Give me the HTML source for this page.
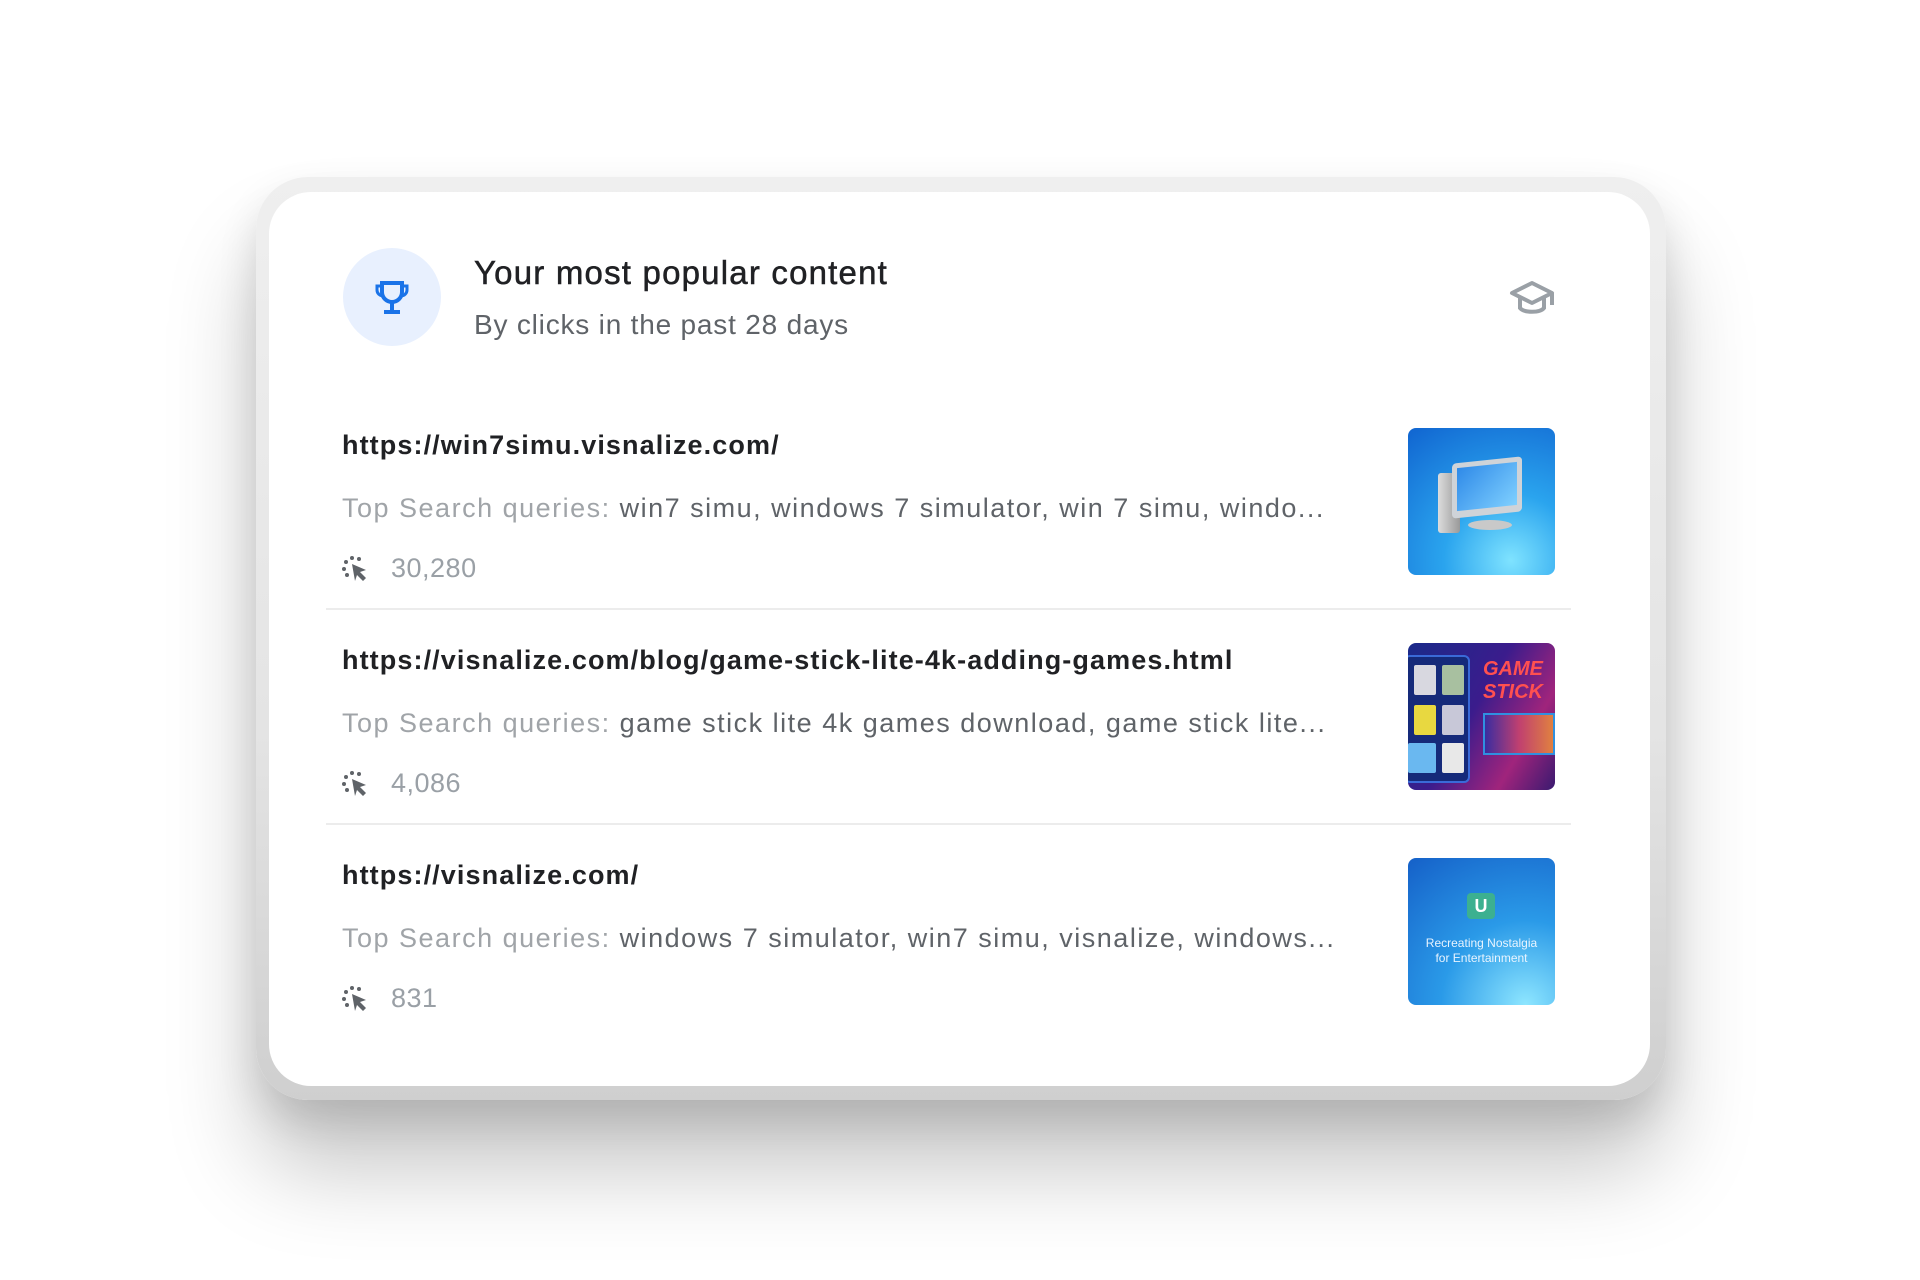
<!DOCTYPE html>
<html><head><meta charset="utf-8"><style>
*{margin:0;padding:0;box-sizing:border-box}
body{width:1920px;height:1280px;background:#fff;position:relative;overflow:hidden;font-family:"Liberation Sans",sans-serif}
.frame{position:absolute;left:256px;top:177px;width:1410px;height:923px;border-radius:52px;background:linear-gradient(180deg,#efefef 0%,#e4e4e4 60%,#cfcfcf 100%);box-shadow:0 70px 90px rgba(0,0,0,0.22),0 20px 40px rgba(0,0,0,0.12)}
.card{position:absolute;left:269px;top:192px;width:1381px;height:894px;border-radius:42px;background:#fff}
.circle{position:absolute;left:343px;top:248px;width:98px;height:98px;border-radius:50%;background:#e8f0fe}
.title{position:absolute;left:474px;top:254px;font-size:33px;color:#202124;white-space:nowrap;letter-spacing:1.2px;-webkit-text-stroke:0.5px #202124}
.sub{position:absolute;left:474px;top:309px;font-size:28px;color:#5f6368;white-space:nowrap;letter-spacing:0.8px}
.url{position:absolute;left:342px;font-size:27px;font-weight:700;color:#202124;white-space:nowrap;letter-spacing:1.1px}
.q{position:absolute;left:342px;font-size:27px;color:#5f6368;white-space:nowrap;letter-spacing:1.5px}
.q span{color:#a0a4a8}
.cnt{position:absolute;left:391px;font-size:27px;color:#9aa0a6;letter-spacing:0.5px}
.ic{position:absolute;left:342px}
.div{position:absolute;left:326px;width:1245px;height:2px;background:#ececec}
.th{position:absolute;left:1408px;width:147px;height:147px;border-radius:8px;overflow:hidden}
</style></head><body>
<div class="frame"></div>
<div class="card"></div>
<div class="circle"></div>
<svg style="position:absolute;left:373px;top:280px" width="38" height="36" viewBox="0 0 38 36"><path d="M9 3h20v9a10 10 0 0 1-20 0z" fill="none" stroke="#1a73e8" stroke-width="4"/><path d="M9 6H4v4a6 6 0 0 0 6 6M29 6h5v4a6 6 0 0 1-6 6" fill="none" stroke="#1a73e8" stroke-width="3"/><path d="M19 22v8M11 32h16" stroke="#1a73e8" stroke-width="4"/></svg>
<div class="title">Your most popular content</div>
<div class="sub">By clicks in the past 28 days</div>
<svg style="position:absolute;left:1508px;top:279px" width="48" height="40" viewBox="0 0 48 40"><path d="M4 14L24 4l20 10-20 10z" fill="none" stroke="#9aa0a6" stroke-width="4" stroke-linejoin="round"/><path d="M12 19v10c4 5 20 5 24 0V19" fill="none" stroke="#9aa0a6" stroke-width="4"/><path d="M44 14v12" stroke="#9aa0a6" stroke-width="4"/></svg>

<div class="url" style="top:430px">https://win7simu.visnalize.com/</div>
<div class="q" style="top:493px"><span>Top Search queries:</span> win7 simu, windows 7 simulator, win 7 simu, windo...</div>
<svg class="ic" style="top:555px" width="28" height="26" viewBox="0 0 28 26"><g fill="#5f6368"><circle cx="10" cy="3" r="2"/><circle cx="4" cy="7" r="2"/><circle cx="2" cy="14" r="2"/><circle cx="17" cy="4" r="2"/><circle cx="5" cy="20" r="2"/><path d="M10 9l14 6-6 2 6 6-3 3-6-6-2 6z"/></g></svg>
<div class="cnt" style="top:553px">30,280</div>
<div class="th" style="top:428px;background:radial-gradient(circle at 70% 90%,#7fe3ff 0%,#2aa4ee 40%,#1064d0 100%)">
<div style="position:absolute;left:30px;top:45px;width:22px;height:60px;background:linear-gradient(90deg,#ddd,#999);border-radius:3px"></div>
<div style="position:absolute;left:44px;top:32px;width:70px;height:55px;background:#cfd3d8;border-radius:4px;transform:skewY(-6deg)"><div style="margin:5px;height:43px;background:linear-gradient(135deg,#2f8ae8,#7fd0ff)"></div></div>
<div style="position:absolute;left:60px;top:92px;width:44px;height:10px;background:#c9c9c9;border-radius:50%"></div></div>
<div class="div" style="top:608px"></div>

<div class="url" style="top:645px">https://visnalize.com/blog/game-stick-lite-4k-adding-games.html</div>
<div class="q" style="top:708px"><span>Top Search queries:</span> game stick lite 4k games download, game stick lite...</div>
<svg class="ic" style="top:770px" width="28" height="26" viewBox="0 0 28 26"><g fill="#5f6368"><circle cx="10" cy="3" r="2"/><circle cx="4" cy="7" r="2"/><circle cx="2" cy="14" r="2"/><circle cx="17" cy="4" r="2"/><circle cx="5" cy="20" r="2"/><path d="M10 9l14 6-6 2 6 6-3 3-6-6-2 6z"/></g></svg>
<div class="cnt" style="top:768px">4,086</div>
<div class="th" style="top:643px;background:linear-gradient(120deg,#1a2a8a 0%,#3b1c8c 45%,#a0247c 75%,#3a1a70 100%)">
<div style="position:absolute;left:-4px;top:12px;width:66px;height:128px;border:2px solid #3a6ad8;border-radius:6px;background:#152a7a"></div>
<div style="position:absolute;left:6px;top:22px;width:22px;height:30px;background:#d8d8e0;border-radius:2px"></div>
<div style="position:absolute;left:34px;top:22px;width:22px;height:30px;background:#a8c0a0;border-radius:2px"></div>
<div style="position:absolute;left:6px;top:62px;width:22px;height:30px;background:#e8d840;border-radius:2px"></div>
<div style="position:absolute;left:34px;top:62px;width:22px;height:30px;background:#c8c8d8;border-radius:2px"></div>
<div style="position:absolute;left:0;top:100px;width:28px;height:30px;background:#6ab8f0;border-radius:2px"></div>
<div style="position:absolute;left:34px;top:100px;width:22px;height:30px;background:#e8e8e8;border-radius:2px"></div>
<div style="position:absolute;left:75px;top:70px;width:72px;height:42px;background:linear-gradient(90deg,#3a2ca0,#c04070,#e08040);border:2px solid #3090e0"></div>
<div style="position:absolute;left:75px;top:15px;font:bold italic 20px 'Liberation Sans';color:#ff5050">GAME<br>STICK</div></div>
<div class="div" style="top:823px"></div>

<div class="url" style="top:860px">https://visnalize.com/</div>
<div class="q" style="top:923px"><span>Top Search queries:</span> windows 7 simulator, win7 simu, visnalize, windows...</div>
<svg class="ic" style="top:985px" width="28" height="26" viewBox="0 0 28 26"><g fill="#5f6368"><circle cx="10" cy="3" r="2"/><circle cx="4" cy="7" r="2"/><circle cx="2" cy="14" r="2"/><circle cx="17" cy="4" r="2"/><circle cx="5" cy="20" r="2"/><path d="M10 9l14 6-6 2 6 6-3 3-6-6-2 6z"/></g></svg>
<div class="cnt" style="top:983px">831</div>
<div class="th" style="top:858px;background:radial-gradient(circle at 80% 100%,#8ee6ff 0%,#2a9ae8 45%,#1560c8 100%)">
<div style="position:absolute;left:59px;top:35px;width:28px;height:26px;background:#3cb090;border-radius:4px;color:#fff;font:bold 18px 'Liberation Sans';text-align:center;line-height:26px">U</div>
<div style="position:absolute;left:0;top:78px;width:147px;text-align:center;font:12px/15px 'Liberation Sans';color:#e8f4ff">Recreating Nostalgia<br>for Entertainment</div></div>
</body></html>
